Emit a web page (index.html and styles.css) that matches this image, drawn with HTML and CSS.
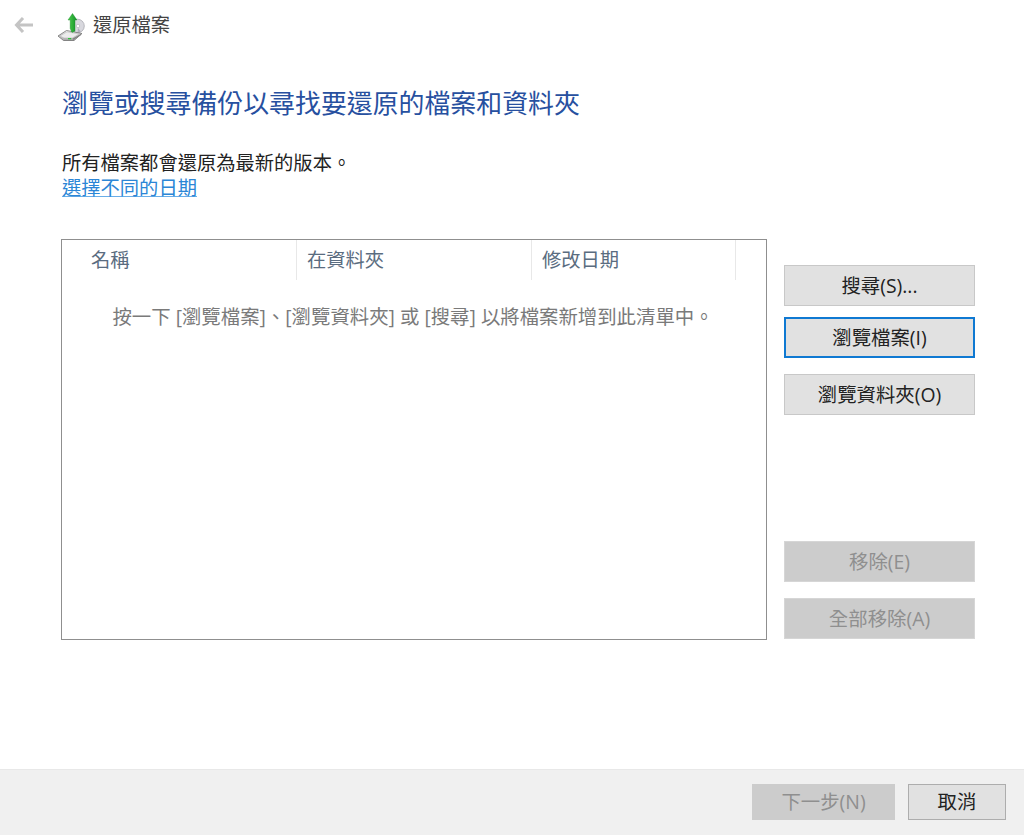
FILE: index.html
```html
<!DOCTYPE html>
<html lang="zh-Hant">
<head>
<meta charset="utf-8">
<title>還原檔案</title>
<link rel="stylesheet" href="styles.css">
</head>
<body>
<div class="page">
  <header class="topbar">
    <svg class="back" width="20" height="16" viewBox="0 0 20 16"><path d="M9 1 2.500 8 9 15M3 8h16" fill="none" stroke="#c4c4c4" stroke-width="3"/></svg>
    <svg class="app-icon" width="28" height="28" viewBox="0 0 28 28">
      <defs>
        <linearGradient id="d" x1="0" y1="0" x2="0" y2="1"><stop offset="0" stop-color="#f4f4f4"/><stop offset="1" stop-color="#a8a8a8"/></linearGradient>
        <linearGradient id="g" x1="0" y1="0" x2="1" y2="0"><stop offset="0" stop-color="#4ccf4c"/><stop offset="1" stop-color="#129028"/></linearGradient>
      </defs>
      <circle cx="20.500" cy="13" r="6.800" fill="#d8d8de" stroke="#a0a0a8" stroke-width=".7"/>
      <circle cx="21" cy="13" r="1.700" fill="#fff" stroke="#8f8f98" stroke-width=".4"/>
      <path d="M21 15l3 3.500-3.500 1z" fill="#b0b0bc"/>
      <path d="M1 23 9.500 17.500 25 20.500 17 27.500H6.500z" fill="url(#d)" stroke="#6e6e6e" stroke-width=".8"/>
      <path d="M3 23 10 18.800 22 21 15.500 25H7z" fill="#ececec" stroke="#b0b0b0" stroke-width=".5"/>
      <path d="M15.500 25.800 24 20.800v1.300l-8 5z" fill="#808080"/>
      <path d="M11 25h3.200v1.300H11z" fill="#2fbf3a"/>
      <path d="M15.500 .5 11 7H13.200V15.500L15 19.500 18 18V7H20z" fill="url(#g)" stroke="#1d8a2c" stroke-width=".4"/>
    </svg>
    <span class="window-title">還原檔案</span>
  </header>

  <main class="content">
    <h1 class="heading">瀏覽或搜尋備份以尋找要還原的檔案和資料夾</h1>
    <p class="note">所有檔案都會還原為最新的版本。</p>
    <a class="link" href="#">選擇不同的日期</a>

    <div class="workspace">
      <section class="list">
        <div class="list-head">
          <div class="col col-name">名稱</div>
          <div class="col col-folder">在資料夾</div>
          <div class="col col-date">修改日期</div>
        </div>
        <p class="empty">按一下 [瀏覽檔案]、[瀏覽資料夾] 或 [搜尋] 以將檔案新增到此清單中。</p>
      </section>

      <div class="actions">
        <button class="btn">搜尋(S)...</button>
        <button class="btn btn-focus">瀏覽檔案(I)</button>
        <button class="btn btn-third">瀏覽資料夾(O)</button>
        <div class="spacer"></div>
        <button class="btn btn-disabled">移除(E)</button>
        <button class="btn btn-disabled btn-last">全部移除(A)</button>
      </div>
    </div>
  </main>

  <footer class="footer">
    <button class="btn btn-disabled btn-next">下一步(N)</button>
    <button class="btn btn-cancel">取消</button>
  </footer>
</div>
</body>
</html>
```

FILE: styles.css
```css
* { box-sizing: border-box; }
html, body { margin: 0; height: 100%; }
body {
  background: #fff;
  color: #222;
  font-family: "Open Sans", "Noto Sans CJK TC", sans-serif;
  font-size: 19.3px;
  overflow: hidden;
}
.page { display: flex; flex-direction: column; height: 835px; }

.topbar { display: flex; align-items: center; height: 49px; padding-left: 14px; }
.back { flex: none; }
.app-icon { flex: none; margin-left: 23px; margin-top: 4px; }
.window-title { margin: 0 0 1px 8px; font-size: 19.3px; color: #444; }

.content { flex: 1; padding: 38px 48px 0 61px; display: flex; flex-direction: column; align-items: flex-start; }
.heading { margin: 0 0 0 1px; font-size: 25.9px; line-height: 32px; font-weight: 400; color: #27509f; }
.note { margin: 32px 0 0 1px; line-height: 24px; color: #222; }
.link { margin-left: 1px; line-height: 26px; color: #2b86d6; text-decoration-color: #6aaee8; }

.workspace { display: flex; margin-top: 38px; width: 100%; }
.list { width: 706px; height: 401px; border: 1px solid #8f8f8f; flex: none; }
.list-head { display: flex; height: 40px; color: #5a6c80; font-size: 19.3px; }
.col { border-right: 1px solid #e8e8e8; line-height: 39px; white-space: nowrap; }
.col-name { width: 235px; padding-left: 29px; }
.col-folder { width: 235px; padding-left: 10px; }
.col-date { width: 204px; padding-left: 10px; }
.empty { margin: 22px 0 0; text-align: center; font-size: 19.4px; line-height: 30px; color: #7a7a7a; white-space: nowrap; padding-right: 2px; }

.actions { display: flex; flex-direction: column; width: 191px; margin: 26px 0 0 17px; height: 374px; }
.btn {
  display: block;
  width: 191px;
  height: 41px;
  padding: 0 0 3px;
  background: #e1e1e1;
  border: 1px solid #c8c8c8;
  border-radius: 0;
  color: #222;
  font: inherit;
  font-size: 19.4px;
}
.btn-focus { margin-top: 11px; border: 2px solid #0f79d2; }
.btn-third { margin-top: 16px; }
.spacer { flex: 1; }
.btn-disabled { background: #cccccc; border-color: #d6d6d6; color: #8f8f8f; }
.btn-last { margin-top: 16px; }

.footer {
  display: flex;
  justify-content: flex-end;
  gap: 13px;
  height: 66px;
  padding: 14px 18px 0 0;
  background: #f0f0f0;
  border-top: 1px solid #e8e8e8;
}
.btn-next { width: 143px; height: 36px; border-color: #cccccc; }
.btn-cancel { width: 98px; height: 36px; border-color: #adadad; }
```
